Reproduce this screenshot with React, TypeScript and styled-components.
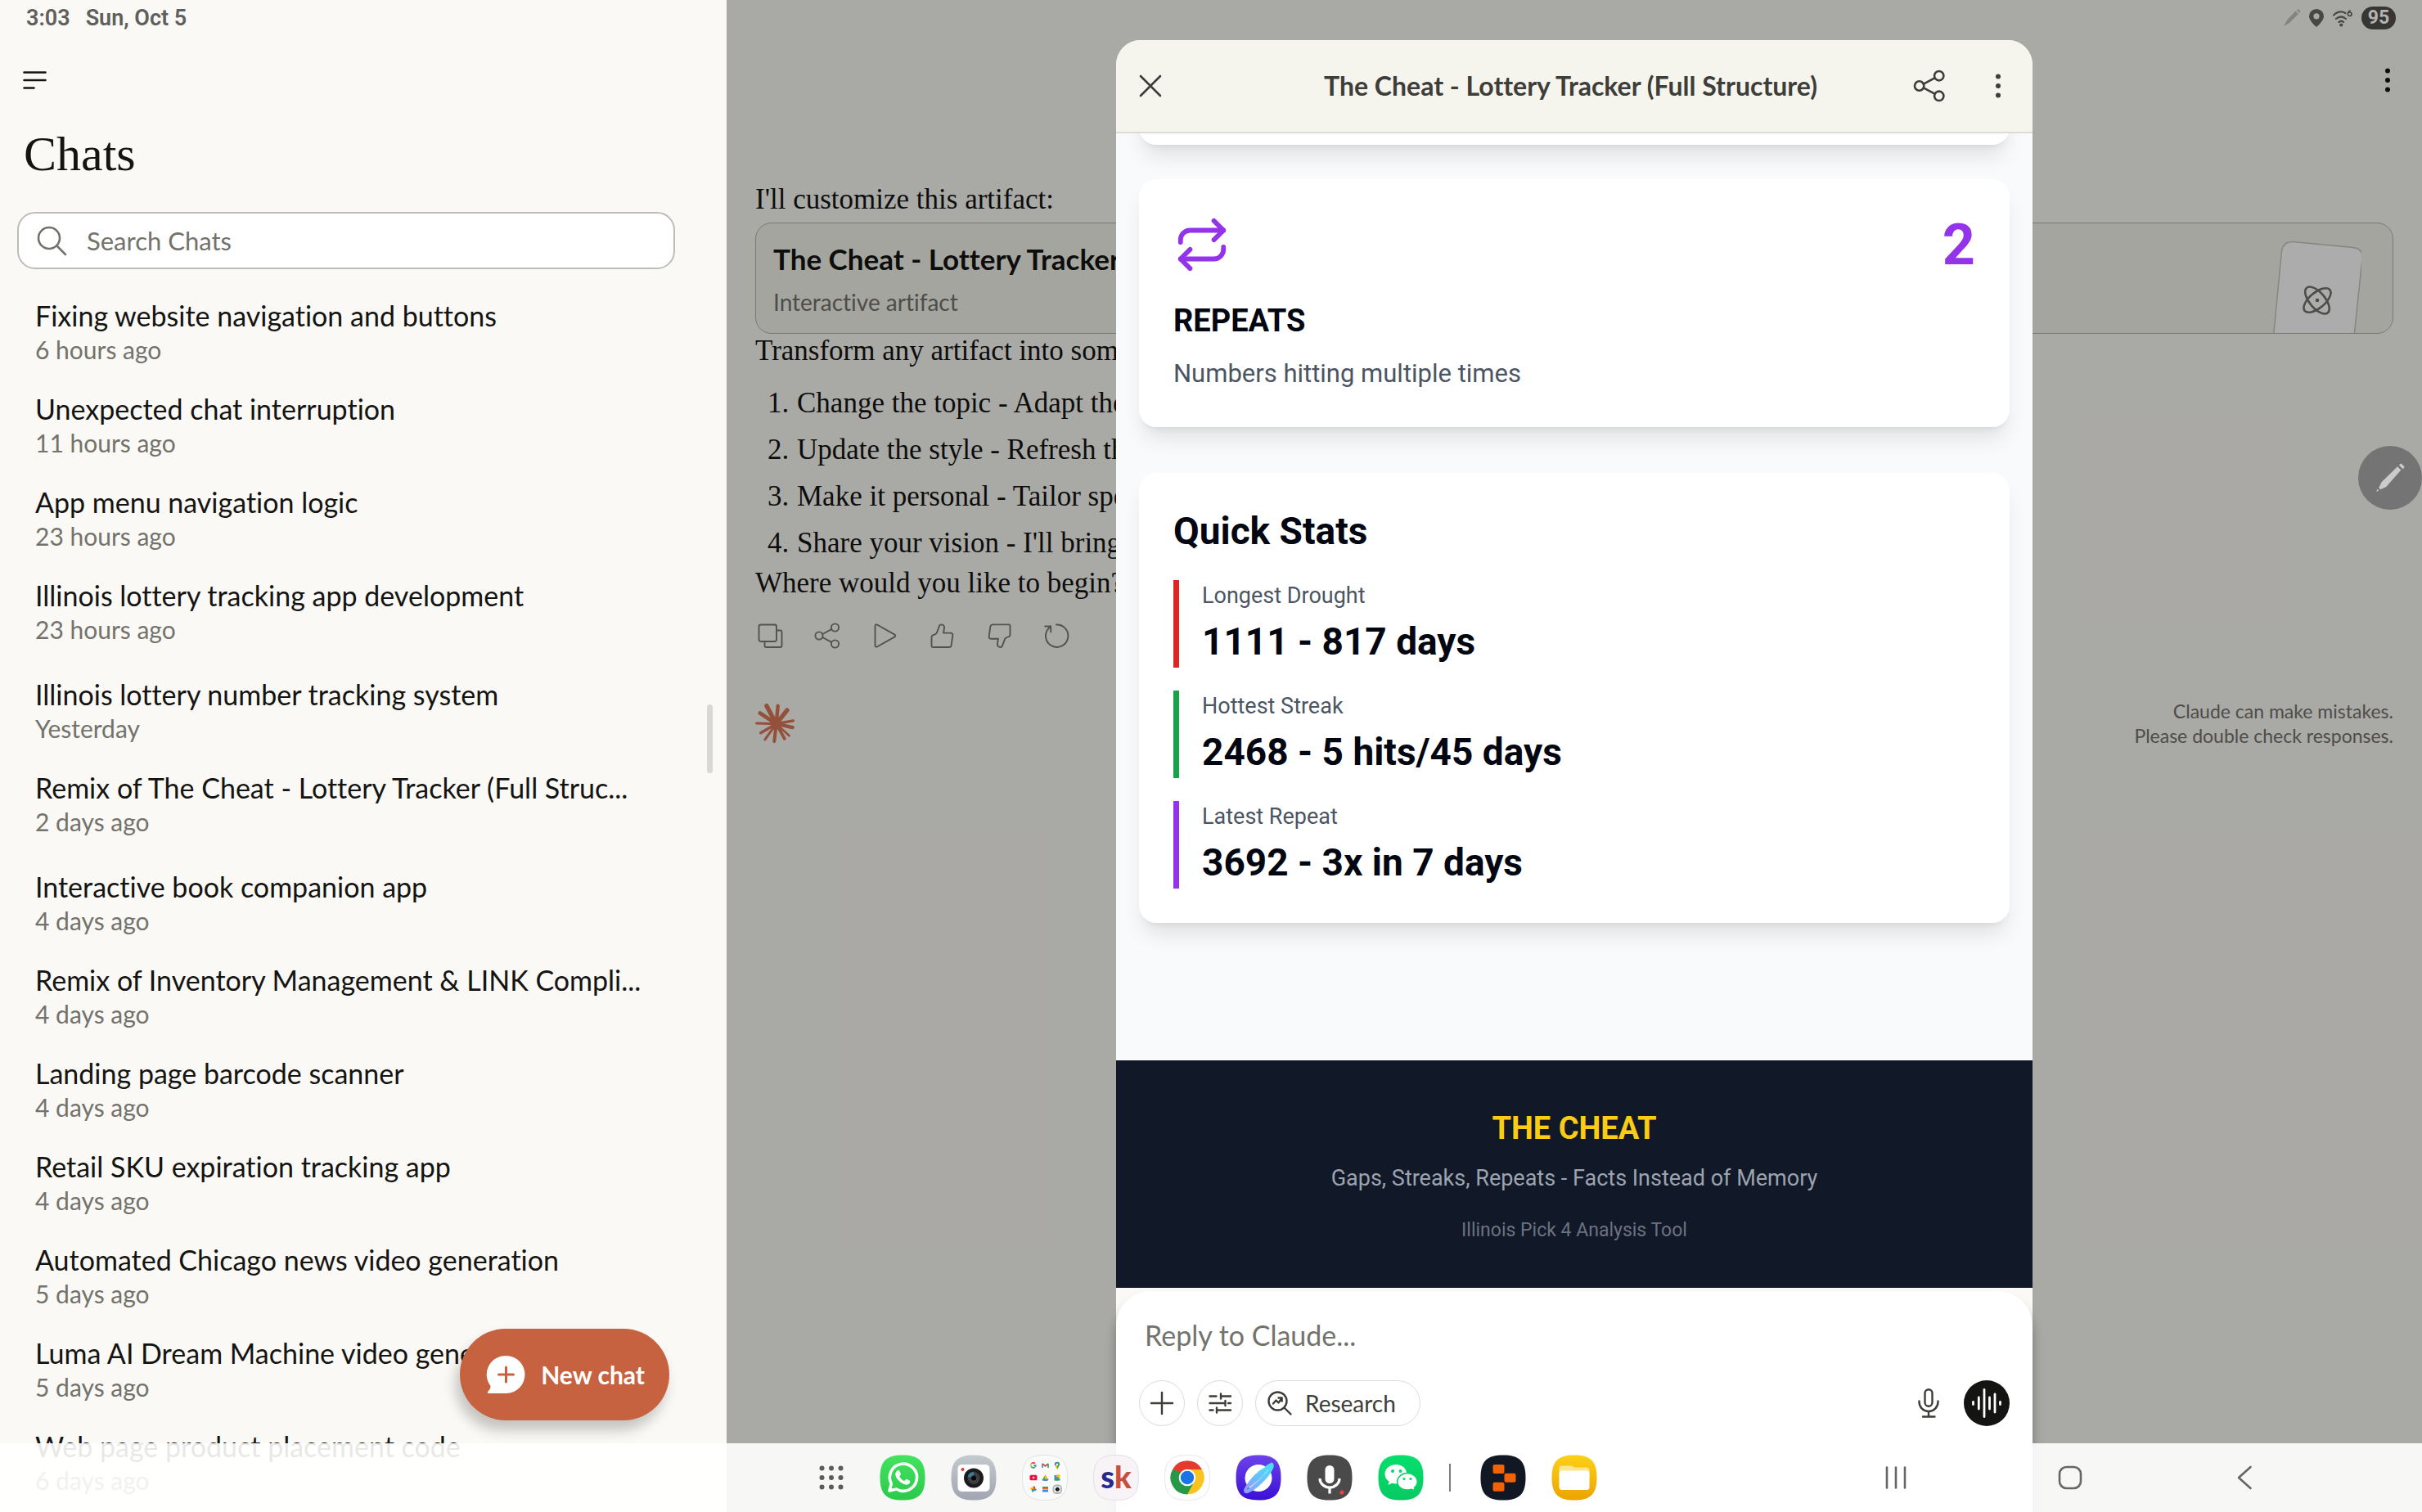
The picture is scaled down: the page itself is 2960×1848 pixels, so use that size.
import React from "react";
import styled, { createGlobalStyle } from "styled-components";

const sans = `Lato, "Open Sans", "Noto Sans", sans-serif`;
const serif = `"Liberation Serif", "DejaVu Serif", serif`;
const roboto = `Roboto, "Noto Sans", sans-serif`;

const GlobalStyle = createGlobalStyle`
  *, *::before, *::after { box-sizing: border-box; }
  body { margin: 0; background: #faf9f5; font-family: ${sans}; font-variant-ligatures: none; color: #141413; }
  h1, h2, h3, p, ol, ul { margin: 0; padding: 0; font-weight: inherit; font-size: inherit; }
  ul, ol { list-style: none; }
  button, input { font: inherit; font-variant-ligatures: none; color: inherit; }
  button { border: 0; padding: 0; background: none; cursor: pointer; }
  svg { display: block; flex: none; }
`;

/* ---------- shell ---------- */

const Shell = styled.div`
  position: relative;
  display: grid;
  grid-template-columns: 30% 1fr;
  height: 100vh;
  overflow: hidden;
`;

const StatusBar = styled.div`
  position: absolute;
  inset: 0 0 auto 0;
  z-index: 5;
  display: flex;
  justify-content: space-between;
  align-items: center;
  height: 44px;
  padding: 0 32px;
  font-family: ${roboto};
  font-weight: 600;
  font-size: 27px;
  line-height: 44px;
  color: #5f5f5c;
`;

const StatusGroup = styled.div<{ $gap: number }>`
  display: flex;
  align-items: center;
  gap: ${(p) => p.$gap}px;
`;

const Battery = styled.span`
  display: block;
  width: 42px;
  height: 28px;
  border-radius: 14px;
  background: #363634;
  color: #b4b3ae;
  font-size: 23px;
  font-weight: 700;
  line-height: 28px;
  text-align: center;
`;

/* ---------- sidebar ---------- */

const Sidebar = styled.aside`
  position: relative;
  padding: 76px 63px 0 21px;
  background: #faf9f5;
  overflow: hidden;
`;

const IconButton = styled.button`
  display: block;
  height: 44px;
`;

const Heading = styled.h1`
  margin: 32px 0 0 8px;
  font-family: ${serif};
  font-size: 60px;
  line-height: 72px;
`;

const SearchBox = styled.label`
  display: flex;
  align-items: center;
  gap: 24px;
  height: 70px;
  margin-top: 35px;
  padding: 0 22px;
  border: 2px solid #bdbcb9;
  border-radius: 22px;
  background: #fff;
  color: #73726c;
`;

const TextInput = styled.input<{ $size: number }>`
  flex: 1;
  min-width: 0;
  width: 100%;
  padding: 0;
  border: 0;
  outline: 0;
  background: transparent;
  font-size: ${(p) => p.$size}px;
  line-height: 44px;
  height: 44px;
  &::placeholder { color: #73726c; opacity: 1; }
`;

const Groups = styled.div`
  display: flex;
  flex-direction: column;
  gap: 7px;
  margin-top: 20px;
`;

const ChatRow = styled.a`
  display: block;
  padding: 16px 22px;
  color: inherit;
  text-decoration: none;
  white-space: nowrap;
`;

const ChatTitle = styled.span`
  display: block;
  font-size: 34px;
  line-height: 42px;
`;

const ChatTime = styled.span`
  display: block;
  font-size: 30px;
  line-height: 40px;
  color: #73726c;
`;

const ScrollThumb = styled.div`
  position: absolute;
  top: 861px;
  right: 17px;
  width: 7px;
  height: 84px;
  border-radius: 4px;
  background: #d9d8d5;
`;

const NewChat = styled.button`
  position: absolute;
  right: 70px;
  bottom: 112px;
  display: flex;
  align-items: center;
  gap: 19px;
  height: 112px;
  padding: 0 30px 0 32px;
  border-radius: 56px;
  background: #c66240;
  color: #fff;
  font-size: 30px;
  font-weight: 700;
  box-shadow: -5px 12px 16px rgba(0, 0, 0, 0.22);
`;

/* ---------- conversation ---------- */

const Main = styled.main`
  position: relative;
  background: #faf9f5;
`;

const Conversation = styled.section`
  display: flex;
  flex-direction: column;
  padding: 76px 35px 0;
  font-family: ${serif};
  font-size: 35px;
  line-height: 40px;
  white-space: nowrap;
  overflow: hidden;
`;

const TopActions = styled.div`
  display: flex;
  justify-content: flex-end;
  height: 148px;
`;

const ArtifactCard = styled.button`
  display: flex;
  justify-content: space-between;
  height: 136px;
  margin: 8px 0 1px;
  padding: 21px 38px 0 21px;
  border: 1px solid #b3b4ab;
  border-radius: 20px;
  background: #f2f3ea;
  font-family: ${sans};
  text-align: left;
  overflow: hidden;
`;

const ArtifactName = styled.span`
  display: block;
  font-size: 35px;
  font-weight: 700;
  line-height: 44px;
`;

const ArtifactKind = styled.span`
  display: block;
  margin-top: 13px;
  font-size: 28px;
  line-height: 36px;
  color: #73726c;
`;

const Steps = styled.ol`
  display: flex;
  flex-direction: column;
  gap: 17px;
  margin: 24px 0 9px;
  padding-left: 15px;
`;

const Step = styled.li`
  display: grid;
  grid-template-columns: 36px 1fr;
`;

const MessageActions = styled.div`
  display: flex;
  gap: 36px;
  margin-top: 27px;
  padding-left: 1px;
  color: #7a7973;
`;

const Signature = styled.div`
  display: flex;
  justify-content: space-between;
  align-items: center;
  margin-top: 60px;
`;

const Disclaimer = styled.p`
  font-family: ${sans};
  font-size: 23px;
  line-height: 30px;
  text-align: right;
  color: #73726c;
`;

/* ---------- artifact sheet ---------- */

const Scrim = styled.div`
  position: absolute;
  inset: 0;
  display: flex;
  justify-content: center;
  padding-top: 49px;
  background: rgba(0, 0, 0, 0.32);
`;

const Sheet = styled.div`
  display: flex;
  flex-direction: column;
  width: 100%;
  max-width: 1120px;
  border-radius: 30px 30px 0 0;
  background: #faf9f5;
`;

const SheetHeader = styled.header`
  display: grid;
  grid-template-columns: 1fr auto 1fr;
  align-items: center;
  height: 114px;
  padding: 0 35px 0 26px;
  border-bottom: 2px solid #dddcd6;
  border-radius: 30px 30px 0 0;
  background: #f5f4ed;
  color: #3d3d3a;
`;

const SheetTitle = styled.h2`
  font-size: 32px;
  font-weight: 700;
  line-height: 44px;
`;

const HeaderActions = styled.div`
  display: flex;
  justify-content: flex-end;
  align-items: center;
  gap: 56px;
`;

const SheetBody = styled.div`
  display: flex;
  flex-direction: column;
  flex: 1;
  min-height: 0;
  overflow: hidden;
  background: #f9fafb;
  font-family: ${roboto};
  color: #030712;
`;

const Cards = styled.div`
  display: flex;
  flex-direction: column;
  padding: 0 28px;
`;

const Card = styled.section<{ $gap: number }>`
  margin-top: ${(p) => p.$gap}px;
  padding: 42px;
  border-radius: 21px;
  background: #fff;
  box-shadow: 0 18px 26px -5px rgba(0, 0, 0, 0.1), 0 7px 10px -7px rgba(0, 0, 0, 0.1);
`;

const CardTop = styled.div`
  display: flex;
  justify-content: space-between;
  align-items: center;
  color: #9333ea;
`;

const BigNumber = styled.span`
  font-size: 70px;
  font-weight: 700;
  line-height: 76px;
`;

const CardName = styled.h3`
  margin-top: 28px;
  font-size: 38px;
  font-weight: 700;
  line-height: 54px;
`;

const CardNote = styled.p`
  margin-top: 14px;
  font-size: 31px;
  line-height: 47px;
  color: #4b5563;
`;

const StatsTitle = styled.h3`
  font-size: 46px;
  font-weight: 700;
  line-height: 58px;
  margin-bottom: 31px;
`;

const StatList = styled.ul`
  display: flex;
  flex-direction: column;
  gap: 28px;
`;

const Stat = styled.li<{ $color: string }>`
  display: flex;
  flex-direction: column;
  gap: 6px;
  padding-left: 28px;
  border-left: 7px solid ${(p) => p.$color};
`;

const StatLabel = styled.span`
  font-size: 27px;
  line-height: 38px;
  color: #4b5563;
`;

const StatValue = styled.span`
  font-size: 46px;
  font-weight: 700;
  line-height: 63px;
`;

const SheetFooter = styled.footer`
  margin-top: auto;
  padding: 56px 28px 54px;
  background: #111827;
  text-align: center;
`;

const Brand = styled.p`
  font-size: 38px;
  font-weight: 700;
  line-height: 54px;
  color: #facc15;
`;

const Tagline = styled.p`
  margin-top: 14px;
  font-size: 27px;
  line-height: 40px;
  color: #9ca3af;
`;

const FinePrint = styled.p`
  margin-top: 28px;
  font-size: 23px;
  line-height: 32px;
  color: #6b7280;
`;

const Composer = styled.form`
  margin-top: 4px;
  height: 270px;
  padding: 32px 28px 0;
  border-radius: 42px 42px 0 0;
  background: #fff;
  box-shadow: 0 12px 14px rgba(0, 0, 0, 0.3);
`;

const ReplyLabel = styled.label`
  display: flex;
  padding: 0 7px;
`;

const ComposerTools = styled.div`
  display: flex;
  align-items: center;
  gap: 15px;
  margin-top: 33px;
  color: #3d3d3a;
`;

const RoundTool = styled.button`
  display: grid;
  place-items: center;
  width: 56px;
  height: 56px;
  border: 1px solid #dcdbd8;
  border-radius: 50%;
`;

const ResearchTool = styled.button`
  display: flex;
  align-items: center;
  gap: 15px;
  height: 56px;
  padding: 0 29px 0 13px;
  border: 1px solid #dcdbd8;
  border-radius: 28px;
  font-size: 28px;
`;

const MicButton = styled.button`
  display: grid;
  place-items: center;
  width: 56px;
  height: 56px;
  margin-left: auto;
`;

const VoiceButton = styled(RoundTool)`
  border: 0;
  background: #141413;
  color: #fff;
`;

/* ---------- system chrome ---------- */

const EdgeHandle = styled.button`
  position: absolute;
  top: 545px;
  right: 0;
  z-index: 4;
  display: grid;
  place-items: center;
  width: 78px;
  height: 78px;
  border-radius: 50%;
  background: #747474;
  color: #cbcbcb;
`;

const Taskbar = styled.nav`
  position: absolute;
  inset: auto 0 0 0;
  z-index: 6;
  display: grid;
  grid-template-columns: 1fr auto 1fr;
  align-items: center;
  height: 84px;
  background: rgba(255, 255, 255, 0.9);
`;

const Dock = styled.div`
  grid-column: 2;
  display: flex;
  align-items: center;
  gap: 31px;
  padding-right: 20px;
`;

const AppButton = styled.button`
  position: relative;
  width: 56px;
  height: 56px;
`;

const AppText = styled.span`
  position: absolute;
  inset: 0;
  font-family: ${sans};
  font-size: 38px;
  font-weight: 900;
  line-height: 52px;
  text-align: center;
  color: #c94f3d;
`;

const AppTextAccent = styled.span`
  color: #262a8c;
`;

const DockDivider = styled.span`
  width: 2px;
  height: 34px;
  margin-right: 5px;
  background: #7d7d7d;
`;

const SystemKeys = styled.div`
  display: flex;
  justify-content: flex-end;
  gap: 157px;
  padding-right: 189px;
  color: #666;
`;

const SystemKey = styled.button`
  display: grid;
  place-items: center;
  width: 56px;
  height: 56px;
`;

/* ---------- icons ---------- */

type IconProps = { size?: number; w?: number };

const Line: React.FC<{ size: number; box: number; w: number; children: React.ReactNode }> = ({ size, box, w, children }) => (
  <svg width={size} height={size} viewBox={`0 0 ${box} ${box}`} fill="none" stroke="currentColor" strokeWidth={w} strokeLinecap="round" strokeLinejoin="round" aria-hidden="true">
    {children}
  </svg>
);

const MenuIcon = () => (
  <Line size={44} box={44} w={2.6}>
    <path d="M8.500 12.500h26M8.500 22h26M8.500 31.500h12" />
  </Line>
);

const SearchIcon = () => (
  <Line size={37} box={37} w={2.6}>
    <circle cx="15" cy="15" r="13" />
    <path d="M24.500 24.500 35 35" />
  </Line>
);

const DotsIcon = () => (
  <svg width="14" height="44" viewBox="0 0 14 44" fill="currentColor" aria-hidden="true">
    <circle cx="7" cy="10.500" r="3" />
    <circle cx="7" cy="22" r="3" />
    <circle cx="7" cy="33.500" r="3" />
  </svg>
);

const CloseIcon = () => (
  <Line size={32} box={32} w={2.6}>
    <path d="M4 4l24 24M28 4 4 28" />
  </Line>
);

const ShareIcon = ({ size = 34, w = 1.9 }: IconProps) => (
  <Line size={size} box={34} w={w}>
    <circle cx="7" cy="17" r="4.600" />
    <circle cx="26.500" cy="7" r="4.600" />
    <circle cx="26.500" cy="27" r="4.600" />
    <path d="m11.200 15 11-5.800M11.200 19l11 5.800" />
  </Line>
);

const CopyIcon = () => (
  <Line size={34} box={34} w={1.9}>
    <rect x="3.500" y="3.500" width="21.500" height="20.500" rx="2.500" />
    <path d="M25 10.500h4.500a2 2 0 0 1 2 2V29a2 2 0 0 1-2 2h-17a2 2 0 0 1-2-2v-5" />
  </Line>
);

const PlayIcon = () => (
  <Line size={34} box={34} w={1.9}>
    <path d="M5.500 4.900v24.200a1.600 1.600 0 0 0 2.400 1.400l21.500-12.100a1.600 1.600 0 0 0 0-2.800L7.900 3.500a1.600 1.600 0 0 0-2.400 1.400Z" />
  </Line>
);

const ThumbUpIcon = () => (
  <Line size={34} box={34} w={1.9}>
    <path d="M4.500 29.500V18.700q0-1.700 1.500-2.300l3.500-1.500q1-.5 1.400-1.600l3.300-8.600Q14.700 3.400 16 3.400q4.400 0 4 4.200l-.9 6h8.500q3 0 2.700 2.900L28.700 28.300q-.3 2.700-3 2.700H6q-1.500 0-1.500-1.500Z" />
  </Line>
);

const ThumbDownIcon = () => (
  <Line size={34} box={34} w={1.9}>
    <path d="M30.500 4.900v10.800q0 1.700-1.500 2.300l-3.500 1.500q-1 .5-1.400 1.600l-3.300 8.600q-.5 1.300-1.800 1.300-4.400 0-4-4.200l.9-6H7.400q-3 0-2.700-2.900L6.300 6.100q.3-2.700 3-2.700H29q1.500 0 1.500 1.500Z" />
  </Line>
);

const RetryIcon = () => (
  <Line size={34} box={34} w={1.9}>
    <path d="M17 3.500A13.700 13.700 0 1 1 8 7.500L10.200 5.500M3.200 5.500h7v7" />
  </Line>
);

const burst: [number, number, number][] = [
  [41, 8, 16], [82, 8, 13], [115, 24, 16], [137, 62, 10], [135, 86, 13], [123, 116, 8],
  [106, 127, 11], [69, 136, 12], [35, 130, 9], [20, 106, 10], [5, 71, 9], [17, 34, 14],
];

const BurstLogo = () => (
  <svg width="48" height="48" viewBox="0 0 142 142" stroke="#d97757" strokeLinecap="round" aria-hidden="true">
    {burst.map(([x, y, w]) => (
      <path key={`${x}-${y}`} d={`M76 73L${x} ${y}`} strokeWidth={w} />
    ))}
    <circle cx="76" cy="73" r="19" fill="#d97757" stroke="none" />
  </svg>
);

const ArtifactPreview = () => (
  <svg width="108" height="120" viewBox="0 0 108 120" fill="none" aria-hidden="true">
    <path d="M0 122 10.500 13Q12.500 1 24.500 1.500l73.500 7q12 1.500 11 13L98.500 122Z" fill="#fefefe" stroke="#c4c4c0" strokeWidth="1.500" />
    <g stroke="#73726c" strokeWidth="2.600" transform="translate(54 73)">
      <ellipse rx="20" ry="9.500" transform="rotate(50)" />
      <ellipse rx="20" ry="9.500" transform="rotate(-40)" />
    </g>
    <circle cx="54" cy="73" r="2.300" fill="#73726c" />
  </svg>
);

const PenIcon = ({ size = 24 }: IconProps) => (
  <svg width={size} height={size} viewBox="0 0 40 40" fill="currentColor" aria-hidden="true">
    <path d="M29.500 5.500 34 10 15 31.500 7.500 35 5.500 33 9 25.500ZM31.500 3.600 33 2.200q1-.8 2 0l3 3q.8 1 0 2l-1.600 1.400ZM2 38l1.800-3.400L5.500 36.400Z" />
  </svg>
);

const PinIcon = () => (
  <svg width="18" height="22" viewBox="0 0 18 22" fill="#474745" aria-hidden="true">
    <path fillRule="evenodd" d="M9 0a9 8.700 0 0 1 9 8.700C18 13 13.500 18 9 22 4.500 18 0 13 0 8.700A9 8.700 0 0 1 9 0Zm0 5.200a3.600 3.600 0 1 0 0 7.200 3.600 3.600 0 0 0 0-7.200Z" />
  </svg>
);

const WifiIcon = () => (
  <svg width="26" height="24" viewBox="0 0 26 24" fill="none" stroke="#474745" strokeWidth="2.200" strokeLinecap="round" aria-hidden="true">
    <path d="M2 8.500Q9 2 16.500 6M5 13q6-5 12 0M8.300 17q3-2.500 5.800 0" />
    <circle cx="11.200" cy="20.500" r="1" fill="#474745" />
    <path strokeWidth="1.700" d="M22 3q-2.600 1.400-2.600 4.200a2.300 2.300 0 1 0 2.300-2.300q-1.300 0-2 1" />
  </svg>
);

const NewChatIcon = () => (
  <svg width="48" height="48" viewBox="0 0 48 48" aria-hidden="true">
    <path d="M24.500 1A23 23 0 0 1 24.500 47H3.500q-2.500 0-1.200-2.300Q6 41 5.500 38A23 23 0 0 1 24.500 1Z" fill="#fff" />
    <path d="M24.500 15v18M15.500 24h18" stroke="#c66240" strokeWidth="3" strokeLinecap="round" />
  </svg>
);

const RepeatIcon = () => (
  <Line size={70} box={24} w={2}>
    <path d="m17 2 4 4-4 4" />
    <path d="M3 11v-1a4 4 0 0 1 4-4h14" />
    <path d="m7 22-4-4 4-4" />
    <path d="M21 13v1a4 4 0 0 1-4 4H3" />
  </Line>
);

const PlusIcon = () => (
  <Line size={32} box={32} w={2.4}>
    <path d="M16 3v26M3 16h26" />
  </Line>
);

const SlidersIcon = () => (
  <Line size={32} box={32} w={2.4}>
    <path d="M3.500 7.500h8M17 7.500h12M17 4.500v6M3.500 16h17M26 16h3M22.500 13v6M3.500 24.500h4M13 24.500h16M12 21.500v6" />
  </Line>
);

const ResearchIcon = () => (
  <Line size={32} box={32} w={2.4}>
    <circle cx="13.500" cy="13.500" r="11" />
    <path d="m21.500 21.500 8 8M8 16.500l3.500-4 3 3 4-5.500M14.500 9.500h4.200v4" />
  </Line>
);

const MicIcon = () => (
  <Line size={38} box={38} w={2.4}>
    <rect x="14.500" y="2.200" width="9" height="20.500" rx="4.500" />
    <path d="M7.500 16.500v1a11.500 11.500 0 0 0 23 0v-1M19 29v6.500M12 35.500h14.500" />
  </Line>
);

const VoiceIcon = () => (
  <Line size={40} box={40} w={2.8}>
    <path d="M3.500 18.500v3M10.300 13v14M17 3.500v33M23.500 13v14M30 9v22M36.500 18.500v3" />
  </Line>
);

const Tile: React.FC<{ fill: string; stroke?: string; children?: React.ReactNode }> = ({ fill, stroke, children }) => (
  <svg width="56" height="56" viewBox="0 0 56 56" aria-hidden="true">
    <path d="M28 .5C8 .5.5 8 .5 28S8 55.500 28 55.500 55.500 48 55.500 28 48 .5 28 .5Z" fill={fill} stroke={stroke} />
    {children}
  </svg>
);

const Gradient = ({ id, from, to }: { id: string; from: string; to: string }) => (
  <defs>
    <linearGradient id={id} x1="0" y1="0" x2="0" y2="1">
      <stop offset="0" stopColor={from} />
      <stop offset="1" stopColor={to} />
    </linearGradient>
  </defs>
);

const GridDots = () => (
  <svg width="56" height="56" viewBox="0 0 56 56" fill="#5c5c5a" aria-hidden="true">
    {[16.5, 28, 39.5].map((y) => [16.5, 28, 39.5].map((x) => <circle key={`${x}-${y}`} cx={x} cy={y} r="3" />))}
  </svg>
);

const ChatCallTile = () => (
  <Tile fill="url(#tile-chat)">
    <Gradient id="tile-chat" from="#42e35f" to="#2cc94a" />
    <path d="M12 44l2.300-8.500A16.600 16.600 0 1 1 20.500 42Z" fill="none" stroke="#fff" strokeWidth="3.600" strokeLinejoin="round" />
    <path d="M21.500 19.500q1.500-1 2.700 0l1.600 3.800q.4 1-.6 2l-1 1.200q2 4 6 5.700l1.700-1.900q.7-.7 1.500-.3l3.800 1.900q.7 3.300-3.200 4.600-3.400.8-8.600-3Q20 29 19.300 24.500q0-3.200 2.200-5Z" fill="#fff" />
  </Tile>
);

const CameraTile = () => (
  <Tile fill="url(#tile-camera)">
    <Gradient id="tile-camera" from="#c3cbcd" to="#a2a5b2" />
    <rect x="8.500" y="12" width="39" height="33" rx="5" fill="#fff" />
    <circle cx="14.500" cy="18" r="2" fill="#e53935" />
    <circle cx="28" cy="28.500" r="12" fill="#1b1b1c" />
    <circle cx="28" cy="28.500" r="7.500" fill="#3d3d42" />
    <path d="M28 21a7.500 7.500 0 0 0-7.300 6l7.300 1.500Z" fill="#2f7f9d" />
    <circle cx="28" cy="28.500" r="3" fill="#070707" />
  </Tile>
);

const FolderTile = () => (
  <Tile fill="#fafafa" stroke="#e2e2e2">
    <g fill="none" strokeWidth="1.700">
      <path d="M16 10.600a3 3 0 0 0-4.600.8" stroke="#ea4335" />
      <path d="M11.200 11.500a3 3 0 0 0 0 3" stroke="#fbbc04" />
      <path d="M11.300 14.500a3 3 0 0 0 4.500.6" stroke="#34a853" />
      <path d="M15.900 15a3 3 0 0 0 .9-2H14" stroke="#4285f4" />
      <path d="M25 16v-5" stroke="#4285f4" />
      <path d="M25 11l3.500 3L32 11" stroke="#ea4335" />
      <path d="M32 16v-5" stroke="#34a853" />
    </g>
    <path d="M43 8.800a3.300 3.300 0 0 1 3.300 3.300L43 18Z" fill="#34a853" />
    <path d="M43 8.800a3.300 3.300 0 0 0-3.300 3.300L43 18Z" fill="#fbbc04" />
    <path d="M43 8.800a3.300 3.300 0 0 0-3.300 3.300l1 1.500L43 11Z" fill="#4285f4" />
    <circle cx="43" cy="12" r="1.200" fill="#fff" />
    <rect x="9.500" y="24.700" width="9" height="6.600" rx="1.600" fill="#e6143c" />
    <path d="m13.200 26.500 2.700 1.500-2.700 1.500Z" fill="#fff" />
    <path d="M28.500 24.500 24.500 31l1.500 1 3.800-5.500Z" fill="#34a853" />
    <path d="M28.500 24.500 32.500 31h-3l-2.300-4.500Z" fill="#fbbc04" />
    <path d="M26 32h5l1.500-2.500H27.400Z" fill="#4285f4" />
    <rect x="39.500" y="25" width="5.500" height="6.500" fill="#4285f4" />
    <path d="M42 24.500h4.500v4L42 27Z" fill="#fbbc04" />
    <path d="M40 29h6.500v2.500H40Z" fill="#34a853" />
    <path d="M14 42v-4q2.500.5 2.500 4Z" fill="#ea4335" />
    <path d="M14 42h4q-.5 2.500-4 2.500Z" fill="#4285f4" />
    <path d="M14 42v4q-2.500-.5-2.500-4Z" fill="#34a853" />
    <path d="M14 42h-4q.5-2.500 4-2.500Z" fill="#fbbc04" />
    <rect x="25" y="39" width="7" height="2" fill="#34a853" />
    <rect x="25" y="41" width="7" height="1.800" fill="#fbbc04" />
    <rect x="25" y="42.800" width="7" height="2.700" fill="#4285f4" />
    <rect x="25" y="40.600" width="7" height="1" fill="#ea4335" />
    <rect x="37.500" y="36.500" width="11.500" height="11.500" rx="4.500" fill="#aeb4b8" />
    <rect x="39.500" y="38.700" width="7.500" height="7" rx="1" fill="#fff" />
    <circle cx="43.300" cy="42.200" r="2.500" fill="#1b1b1c" />
  </Tile>
);

const ChromeTile = () => (
  <Tile fill="#fff" stroke="#e6e6e6">
    <path d="M28 28 10.200 17.700A20.500 20.500 0 0 1 45.800 17.700Z" fill="#e33b2e" />
    <path d="M28 28 45.800 17.700A20.500 20.500 0 0 1 28 48.500Z" fill="#fcc31e" />
    <path d="M28 28 28 48.500A20.500 20.500 0 0 1 10.200 17.700Z" fill="#279847" />
    <path d="M28 18h17.700q3.300 6 2.500 12L36.500 33.500Z" fill="#fcc31e" />
    <path d="M19.400 33 10.200 17.700 20 22ZM36.500 33 28 48.500 24 36Z" fill="#279847" />
    <circle cx="28" cy="28" r="10.300" fill="#fff" />
    <circle cx="28" cy="28" r="8.200" fill="#1b73e8" />
  </Tile>
);

const PlanetTile = () => (
  <Tile fill="url(#tile-planet)">
    <Gradient id="tile-planet" from="#6d42ea" to="#3a10d6" />
    <defs>
      <linearGradient id="ring" x1="0" y1="1" x2="1" y2="0">
        <stop offset="0" stopColor="#8f9bff" />
        <stop offset="1" stopColor="#45e2f6" />
      </linearGradient>
    </defs>
    <circle cx="28" cy="28.500" r="16.500" fill="#fff" />
    <path d="M44 9.500q3.500 1 2.500 6-3.500 9-14.500 19.500-9.500 9-17 12-5.500 1-5-4 1-3 3.500-6 2 3 .5 5.500 6-3.500 13.500-10.500 9-8.500 13.500-14.500-2 .3-5.500-2.500Q40 11 44 9.500Z" fill="url(#ring)" />
    <path d="M12 39q5-8 11-14 7-7 15-11l3 3Q35 25 27 32q-7 6-14 10Z" fill="url(#ring)" />
  </Tile>
);

const RecorderTile = () => (
  <Tile fill="#4a4a4a">
    <rect x="22.500" y="13" width="11" height="22" rx="5.500" fill="#fff" />
    <path d="M16 29a12 11 0 0 0 24 0M28 40v7.500" fill="none" stroke="#fff" strokeWidth="3.200" />
    <circle cx="43" cy="46" r="2.600" fill="#e8453c" />
  </Tile>
);

const BubblesTile = () => (
  <Tile fill="url(#tile-bubbles)">
    <Gradient id="tile-bubbles" from="#05df6c" to="#08c963" />
    <path d="M22 12c7.500 0 13.300 5 13.300 11.800S29.500 35.500 22 35.500q-2.500 0-4.800-.8L12.500 37l1.200-4.300Q8.500 29.500 8.500 23.800C8.500 17 14.500 12 22 12Z" fill="#fff" />
    <path d="M36 22.500c6.800 0 12.300 4.600 12.300 10.500q0 4.300-3.800 7.300l.7 3.700-3.900-1.700q-2.500.8-5.300.8c-6.800 0-12.300-4.200-12.300-10.100S29.200 22.500 36 22.500Z" fill="#fff" stroke="#06d568" strokeWidth="1.600" />
    <g fill="#06d568">
      <circle cx="18" cy="20" r="2" />
      <circle cx="27.500" cy="20" r="2" />
      <circle cx="32" cy="29.500" r="1.600" />
      <circle cx="40" cy="29.500" r="1.600" />
    </g>
  </Tile>
);

const BlocksTile = () => (
  <Tile fill="#121724">
    <g fill="#f26207">
      <rect x="15.500" y="12" width="14" height="11" rx="2" />
      <rect x="29.500" y="22.800" width="14" height="11" rx="2" />
      <rect x="15.500" y="33.800" width="14" height="11" rx="2" />
    </g>
  </Tile>
);

const FilesTile = () => (
  <Tile fill="url(#tile-files)">
    <Gradient id="tile-files" from="#fdd017" to="#eba400" />
    <path d="M9.500 16.500q0-3 3-3H24q1.500 0 2.500 1t2.500 1h14q3.500 0 3.500 3.500v8h-37Z" fill="#fde58f" />
    <rect x="9.500" y="19.500" width="37" height="23.500" rx="3.500" fill="#fff" />
  </Tile>
);

const RecentsKey = () => (
  <Line size={32} box={32} w={2.6}>
    <path d="M5 3.500v25M16 3.500v25M27 3.500v25" />
  </Line>
);

const HomeKey = () => (
  <Line size={32} box={32} w={2.6}>
    <rect x="3" y="3" width="26" height="26" rx="8.500" />
  </Line>
);

const BackKey = () => (
  <Line size={32} box={32} w={2.6}>
    <path d="M23.500 3 9 16l14.500 13" />
  </Line>
);

/* ---------- data ---------- */

const chatGroups: [string, string][][] = [
  [
    ["Fixing website navigation and buttons", "6 hours ago"],
    ["Unexpected chat interruption", "11 hours ago"],
    ["App menu navigation logic", "23 hours ago"],
    ["Illinois lottery tracking app development", "23 hours ago"],
  ],
  [
    ["Illinois lottery number tracking system", "Yesterday"],
    ["Remix of The Cheat - Lottery Tracker (Full Struc...", "2 days ago"],
  ],
  [
    ["Interactive book companion app", "4 days ago"],
    ["Remix of Inventory Management & LINK Compli...", "4 days ago"],
    ["Landing page barcode scanner", "4 days ago"],
    ["Retail SKU expiration tracking app", "4 days ago"],
    ["Automated Chicago news video generation", "5 days ago"],
    ["Luma AI Dream Machine video gener", "5 days ago"],
    ["Web page product placement code", "6 days ago"],
  ],
];

const steps = [
  "Change the topic - Adapt the",
  "Update the style - Refresh the",
  "Make it personal - Tailor spec",
  "Share your vision - I'll bring it",
];

const messageActions: [string, React.FC][] = [
  ["Copy", CopyIcon],
  ["Share", ShareIcon],
  ["Play", PlayIcon],
  ["Good response", ThumbUpIcon],
  ["Bad response", ThumbDownIcon],
  ["Retry", RetryIcon],
];

const stats = [
  { label: "Longest Drought", value: "1111 - 817 days", color: "#dc2626" },
  { label: "Hottest Streak", value: "2468 - 5 hits/45 days", color: "#16a34a" },
  { label: "Latest Repeat", value: "3692 - 3x in 7 days", color: "#9333ea" },
];

const SkTile = () => (
  <>
    <Tile fill="#f8f3f7" stroke="#e4dfe4" />
    <AppText>
      <AppTextAccent>s</AppTextAccent>k
    </AppText>
  </>
);

const apps: [string, React.FC][] = [
  ["All apps", GridDots],
  ["WhatsApp", ChatCallTile],
  ["Camera", CameraTile],
  ["Google folder", FolderTile],
  ["sk", SkTile],
  ["Chrome", ChromeTile],
  ["Internet", PlanetTile],
  ["Voice Recorder", RecorderTile],
  ["WeChat", BubblesTile],
];

const recentApps: [string, React.FC][] = [
  ["Replit", BlocksTile],
  ["My Files", FilesTile],
];

const AppLink = ({ name, icon: Icon }: { name: string; icon: React.FC }) => (
  <AppButton type="button" aria-label={name}>
    <Icon />
  </AppButton>
);

/* ---------- page ---------- */

export default function App() {
  return (
    <>
      <GlobalStyle />
      <Shell>
        <StatusBar>
          <StatusGroup $gap={19}>
            <span>3:03</span>
            <span>Sun, Oct 5</span>
          </StatusGroup>
          <StatusGroup $gap={10}>
            <svg width="22" height="22" viewBox="0 0 40 40" fill="#85857f" aria-hidden="true">
              <path d="M28 4.500 34.500 11 15 30.500 2 38 9.500 24ZM31 2.500 34 0l5.500 5-3 3.500Z" />
            </svg>
            <PinIcon />
            <WifiIcon />
            <Battery>95</Battery>
          </StatusGroup>
        </StatusBar>

        <Sidebar>
          <IconButton type="button" aria-label="Menu">
            <MenuIcon />
          </IconButton>
          <Heading>Chats</Heading>
          <SearchBox>
            <SearchIcon />
            <TextInput $size={31} type="text" placeholder="Search Chats" aria-label="Search Chats" />
          </SearchBox>
          <Groups>
            {chatGroups.map((group) => (
              <ul key={group[0][0]}>
                {group.map(([title, time]) => (
                  <li key={title}>
                    <ChatRow href="#">
                      <ChatTitle>{title}</ChatTitle>
                      <ChatTime>{time}</ChatTime>
                    </ChatRow>
                  </li>
                ))}
              </ul>
            ))}
          </Groups>
          <ScrollThumb />
          <NewChat type="button">
            <NewChatIcon />
            New chat
          </NewChat>
        </Sidebar>

        <Main>
          <Conversation>
            <TopActions>
              <IconButton type="button" aria-label="More options">
                <DotsIcon />
              </IconButton>
            </TopActions>
            <p>I'll customize this artifact:</p>
            <ArtifactCard type="button">
              <span>
                <ArtifactName>The Cheat - Lottery Tracker (Full Structure)</ArtifactName>
                <ArtifactKind>Interactive artifact</ArtifactKind>
              </span>
              <ArtifactPreview />
            </ArtifactCard>
            <p>Transform any artifact into some</p>
            <Steps>
              {steps.map((step, i) => (
                <Step key={step}>
                  <span>{i + 1}.</span>
                  <span>{step}</span>
                </Step>
              ))}
            </Steps>
            <p>Where would you like to begin?</p>
            <MessageActions>
              {messageActions.map(([name, Icon]) => (
                <button key={name} type="button" aria-label={name}>
                  <Icon />
                </button>
              ))}
            </MessageActions>
            <Signature>
              <BurstLogo />
              <Disclaimer>
                Claude can make mistakes.
                <br />
                Please double check responses.
              </Disclaimer>
            </Signature>
          </Conversation>

          <Scrim>
            <Sheet role="dialog" aria-label="The Cheat - Lottery Tracker (Full Structure)">
              <SheetHeader>
                <button type="button" aria-label="Close">
                  <CloseIcon />
                </button>
                <SheetTitle>The Cheat - Lottery Tracker (Full Structure)</SheetTitle>
                <HeaderActions>
                  <button type="button" aria-label="Share">
                    <ShareIcon size={42} w={2.1} />
                  </button>
                  <button type="button" aria-label="More options">
                    <DotsIcon />
                  </button>
                </HeaderActions>
              </SheetHeader>

              <SheetBody>
                <Cards>
                  <Card $gap={-70} />
                  <Card $gap={42}>
                    <CardTop>
                      <RepeatIcon />
                      <BigNumber>2</BigNumber>
                    </CardTop>
                    <CardName>REPEATS</CardName>
                    <CardNote>Numbers hitting multiple times</CardNote>
                  </Card>
                  <Card $gap={56}>
                    <StatsTitle>Quick Stats</StatsTitle>
                    <StatList>
                      {stats.map((s) => (
                        <Stat key={s.label} $color={s.color}>
                          <StatLabel>{s.label}</StatLabel>
                          <StatValue>{s.value}</StatValue>
                        </Stat>
                      ))}
                    </StatList>
                  </Card>
                </Cards>
                <SheetFooter>
                  <Brand>THE CHEAT</Brand>
                  <Tagline>Gaps, Streaks, Repeats - Facts Instead of Memory</Tagline>
                  <FinePrint>Illinois Pick 4 Analysis Tool</FinePrint>
                </SheetFooter>
              </SheetBody>

              <Composer>
                <ReplyLabel>
                  <TextInput $size={34} type="text" placeholder="Reply to Claude..." aria-label="Reply to Claude" />
                </ReplyLabel>
                <ComposerTools>
                  <RoundTool type="button" aria-label="Add">
                    <PlusIcon />
                  </RoundTool>
                  <RoundTool type="button" aria-label="Tools">
                    <SlidersIcon />
                  </RoundTool>
                  <ResearchTool type="button">
                    <ResearchIcon />
                    Research
                  </ResearchTool>
                  <MicButton type="button" aria-label="Dictate">
                    <MicIcon />
                  </MicButton>
                  <VoiceButton type="button" aria-label="Voice mode">
                    <VoiceIcon />
                  </VoiceButton>
                </ComposerTools>
              </Composer>
            </Sheet>
          </Scrim>
        </Main>

        <EdgeHandle type="button" aria-label="Pen tools">
          <PenIcon size={38} />
        </EdgeHandle>

        <Taskbar>
          <Dock>
            {apps.map(([name, icon]) => (
              <AppLink key={name} name={name} icon={icon} />
            ))}
            <DockDivider />
            {recentApps.map(([name, icon]) => (
              <AppLink key={name} name={name} icon={icon} />
            ))}
          </Dock>
          <SystemKeys>
            <SystemKey type="button" aria-label="Recents">
              <RecentsKey />
            </SystemKey>
            <SystemKey type="button" aria-label="Home">
              <HomeKey />
            </SystemKey>
            <SystemKey type="button" aria-label="Back">
              <BackKey />
            </SystemKey>
          </SystemKeys>
        </Taskbar>
      </Shell>
    </>
  );
}
